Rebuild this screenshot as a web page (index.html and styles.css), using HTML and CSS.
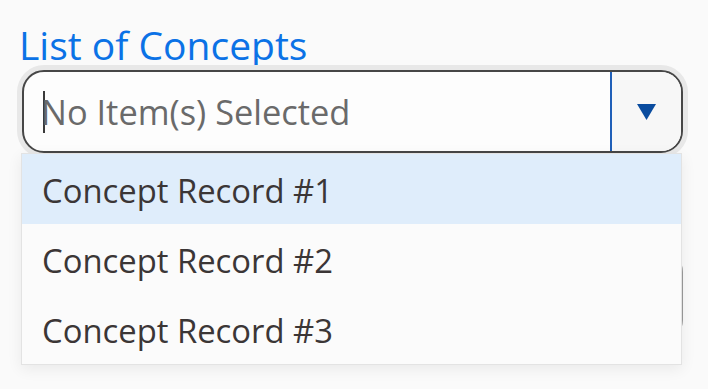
FILE: index.html
```html
<!DOCTYPE html>
<html lang="en">
<head>
<meta charset="utf-8">
<title>List of Concepts</title>
<link rel="stylesheet" href="styles.css">
</head>
<body>
<div class="field">
  <label class="label" for="concepts">List of Concepts</label>
  <div class="combo">
    <div class="select">
      <div class="input" id="concepts"><span class="caret"></span><span class="placeholder">No Item(s) Selected</span></div>
      <div class="toggle">
        <svg width="19" height="16" viewBox="0 0 19 16" aria-hidden="true"><polygon points="0,0 19,0 9.5,16" fill="#0a4c9f"/></svg>
      </div>
    </div>
    <ul class="menu">
      <li class="item active">Concept Record #1</li>
      <li class="item">Concept Record #2</li>
      <li class="item">Concept Record #3</li>
    </ul>
  </div>
  <div class="next-box"></div>
</div>
</body>
</html>
```

FILE: styles.css
```css
html, body {
  margin: 0;
  padding: 0;
  background: #fafafa;
  font-family: "Open Sans", "Noto Sans", sans-serif;
}

body {
  min-height: 100vh;
}

.field {
  position: relative;
  padding: 22px 25px 0 22px;
}

.label {
  display: block;
  font-size: 39px;
  line-height: 46px;
  color: #0b72e6;
  margin-left: -3px;
  margin-bottom: 2px;
}

.combo {
  position: relative;
}

.select {
  display: flex;
  height: 79px;
  border: 2px solid #474747;
  border-radius: 22px;
  background: #fdfdfd;
  box-shadow: 0 0 0 5px #e8e8e8;
  overflow: hidden;
}

.input {
  flex: 1;
  display: flex;
  align-items: center;
  padding-left: 19px;
}

.caret {
  display: inline-block;
  width: 2px;
  height: 42px;
  background: #3a3a3a;
  margin-right: -4px;
}

.placeholder {
  font-size: 34.4px;
  color: #6a6a6a;
}

.toggle {
  width: 69px;
  border-left: 2px solid #1f5fb8;
  background: #f7f7f7;
  display: flex;
  align-items: center;
  justify-content: center;
}

.menu {
  position: absolute;
  z-index: 2;
  left: -1px;
  top: 83px;
  width: 659px;
  margin: 0;
  padding: 0;
  list-style: none;
  background: #fbfbfb;
  border: 1px solid #e3e3e3;
  box-shadow: 0 4px 14px rgba(0, 0, 0, 0.07);
}

.item {
  height: 70px;
  line-height: 73px;
  overflow: hidden;
  padding: 0 20px;
  font-size: 32.8px;
  color: #3b3636;
}

.item.active {
  background: #dfedfb;
}

.next-box {
  margin-top: 97px;
  height: 88px;
  border: 2px solid #9a9a9a;
  border-radius: 22px;
}
```
